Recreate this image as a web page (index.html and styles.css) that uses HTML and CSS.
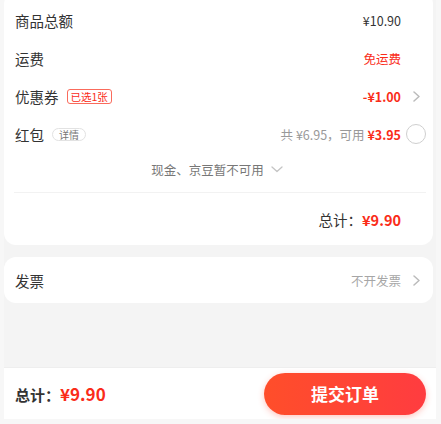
FILE: index.html
```html
<!DOCTYPE html>
<html lang="zh-CN">
<head>
    <meta charset="UTF-8">
    <meta name="viewport" content="width=device-width, initial-scale=1.0">
    <title>确认订单</title>
    <link rel="stylesheet" href="styles.css">
</head>
<body>
    <div class="page">
        <section class="card summary">
            <div class="row">
                <span class="label">商品总额</span>
                <span class="value">¥10.90</span>
                <span class="slot"></span>
            </div>
            <div class="row">
                <span class="label">运费</span>
                <span class="value red">免运费</span>
                <span class="slot"></span>
            </div>
            <div class="row">
                <span class="label">优惠券</span>
                <span class="tag-red">已选1张</span>
                <span class="value red bold">-¥1.00</span>
                <span class="slot">
                    <svg class="chevron" width="7" height="11" viewBox="0 0 7 11"><path d="M1 1l5 4.5L1 10" fill="none" stroke="#bbb" stroke-width="1.5" stroke-linecap="round" stroke-linejoin="round"/></svg>
                </span>
            </div>
            <div class="row">
                <span class="label">红包</span>
                <span class="tag-gray">详情</span>
                <span class="value gray">共 ¥6.95，可用 <b class="red">¥3.95</b></span>
                <span class="slot"><span class="radio"></span></span>
            </div>
            <div class="more">
                现金、京豆暂不可用
                <svg width="12" height="7" viewBox="0 0 12 7"><path d="M1 1l5 4.5L11 1" fill="none" stroke="#c4c4c4" stroke-width="1.3" stroke-linecap="round" stroke-linejoin="round"/></svg>
            </div>
            <div class="divider"></div>
            <div class="row total">
                <span class="total-label">总计：</span>
                <span class="total-price">¥9.90</span>
                <span class="slot"></span>
            </div>
        </section>

        <section class="card invoice">
            <div class="row">
                <span class="label">发票</span>
                <span class="value light">不开发票</span>
                <span class="slot">
                    <svg class="chevron" width="7" height="11" viewBox="0 0 7 11"><path d="M1 1l5 4.5L1 10" fill="none" stroke="#bbb" stroke-width="1.5" stroke-linecap="round" stroke-linejoin="round"/></svg>
                </span>
            </div>
        </section>

        <footer class="bar">
            <div class="bar-total">总计：<span class="bar-price">¥9.90</span></div>
            <button class="submit">提交订单</button>
        </footer>
    </div>
</body>
</html>
```
FILE: styles.css
```css
body {
    margin: 0;
    background-color: #f7f7f7;
    font-family: "Noto Sans CJK SC", "Noto Sans", sans-serif;
    color: #333;
    overflow: hidden;
}

.page {
    width: 432px;
    height: 419px;
    margin-left: 4px;
    background-color: #f4f4f4;
    display: flex;
    flex-direction: column;
}

.card {
    background-color: #fff;
    border-radius: 12px;
    margin-right: 3px;
    padding: 0 6px 0 11px;
}

.summary {
    margin-top: -8px;
    padding-top: 9px;
}

.invoice {
    margin-top: 12px;
}

.invoice .row {
    height: 46px;
}

.row {
    display: flex;
    align-items: center;
    height: 38px;
}

.label {
    font-size: 14.5px;
    color: #333;
}

.value {
    margin-left: auto;
    font-size: 12.5px;
    color: #333;
}

.red {
    color: #fa2c19;
}

.bold {
    font-weight: bold;
}

.gray {
    color: #999;
}

.light {
    color: #a6a6a6;
}

.slot {
    width: 22px;
    margin-left: 4px;
    display: flex;
    justify-content: center;
    align-items: center;
}

.tag-red {
    margin-left: 8px;
    height: 13px;
    line-height: 13px;
    padding: 0 3px;
    border: 1px solid #fa6b5c;
    border-radius: 3px;
    font-size: 10.5px;
    color: #fa2c19;
}

.tag-gray {
    margin-left: 8px;
    height: 11px;
    line-height: 11px;
    padding: 0 6px;
    border: 1px solid #e2e2e2;
    border-radius: 7px;
    font-size: 10px;
    color: #777;
}

.radio {
    width: 18px;
    height: 18px;
    border: 1px solid #cfcfcf;
    border-radius: 50%;
}

.more {
    height: 32px;
    display: flex;
    align-items: center;
    justify-content: center;
    gap: 7px;
    font-size: 12.5px;
    color: #777;
    padding-right: 8px;
}

.divider {
    height: 1px;
    background-color: #f2f2f2;
    margin: 7px 1px 0 -1px;
}

.total {
    height: 52px;
    justify-content: flex-end;
}

.total-label {
    font-size: 14.5px;
    color: #333;
}

.total-price {
    font-size: 14.5px;
    font-weight: bold;
    color: #fa2c19;
}

.bar {
    margin-top: auto;
    height: 52px;
    background-color: #fff;
    border-top: 1px solid #eee;
    box-sizing: border-box;
    display: flex;
    align-items: center;
    justify-content: space-between;
    padding: 0 10px 0 11px;
}

.bar-total {
    font-size: 15px;
    font-weight: bold;
    color: #333;
}

.bar-price {
    font-size: 17px;
    color: #fa2c19;
}

.submit {
    width: 162px;
    height: 42px;
    border: none;
    border-radius: 21px;
    background: linear-gradient(90deg, #ff4e2a, #ff3c40);
    box-shadow: 0 2px 6px rgba(255, 70, 50, 0.3);
    color: #fff;
    font-family: inherit;
    font-size: 17px;
    font-weight: bold;
}
```
